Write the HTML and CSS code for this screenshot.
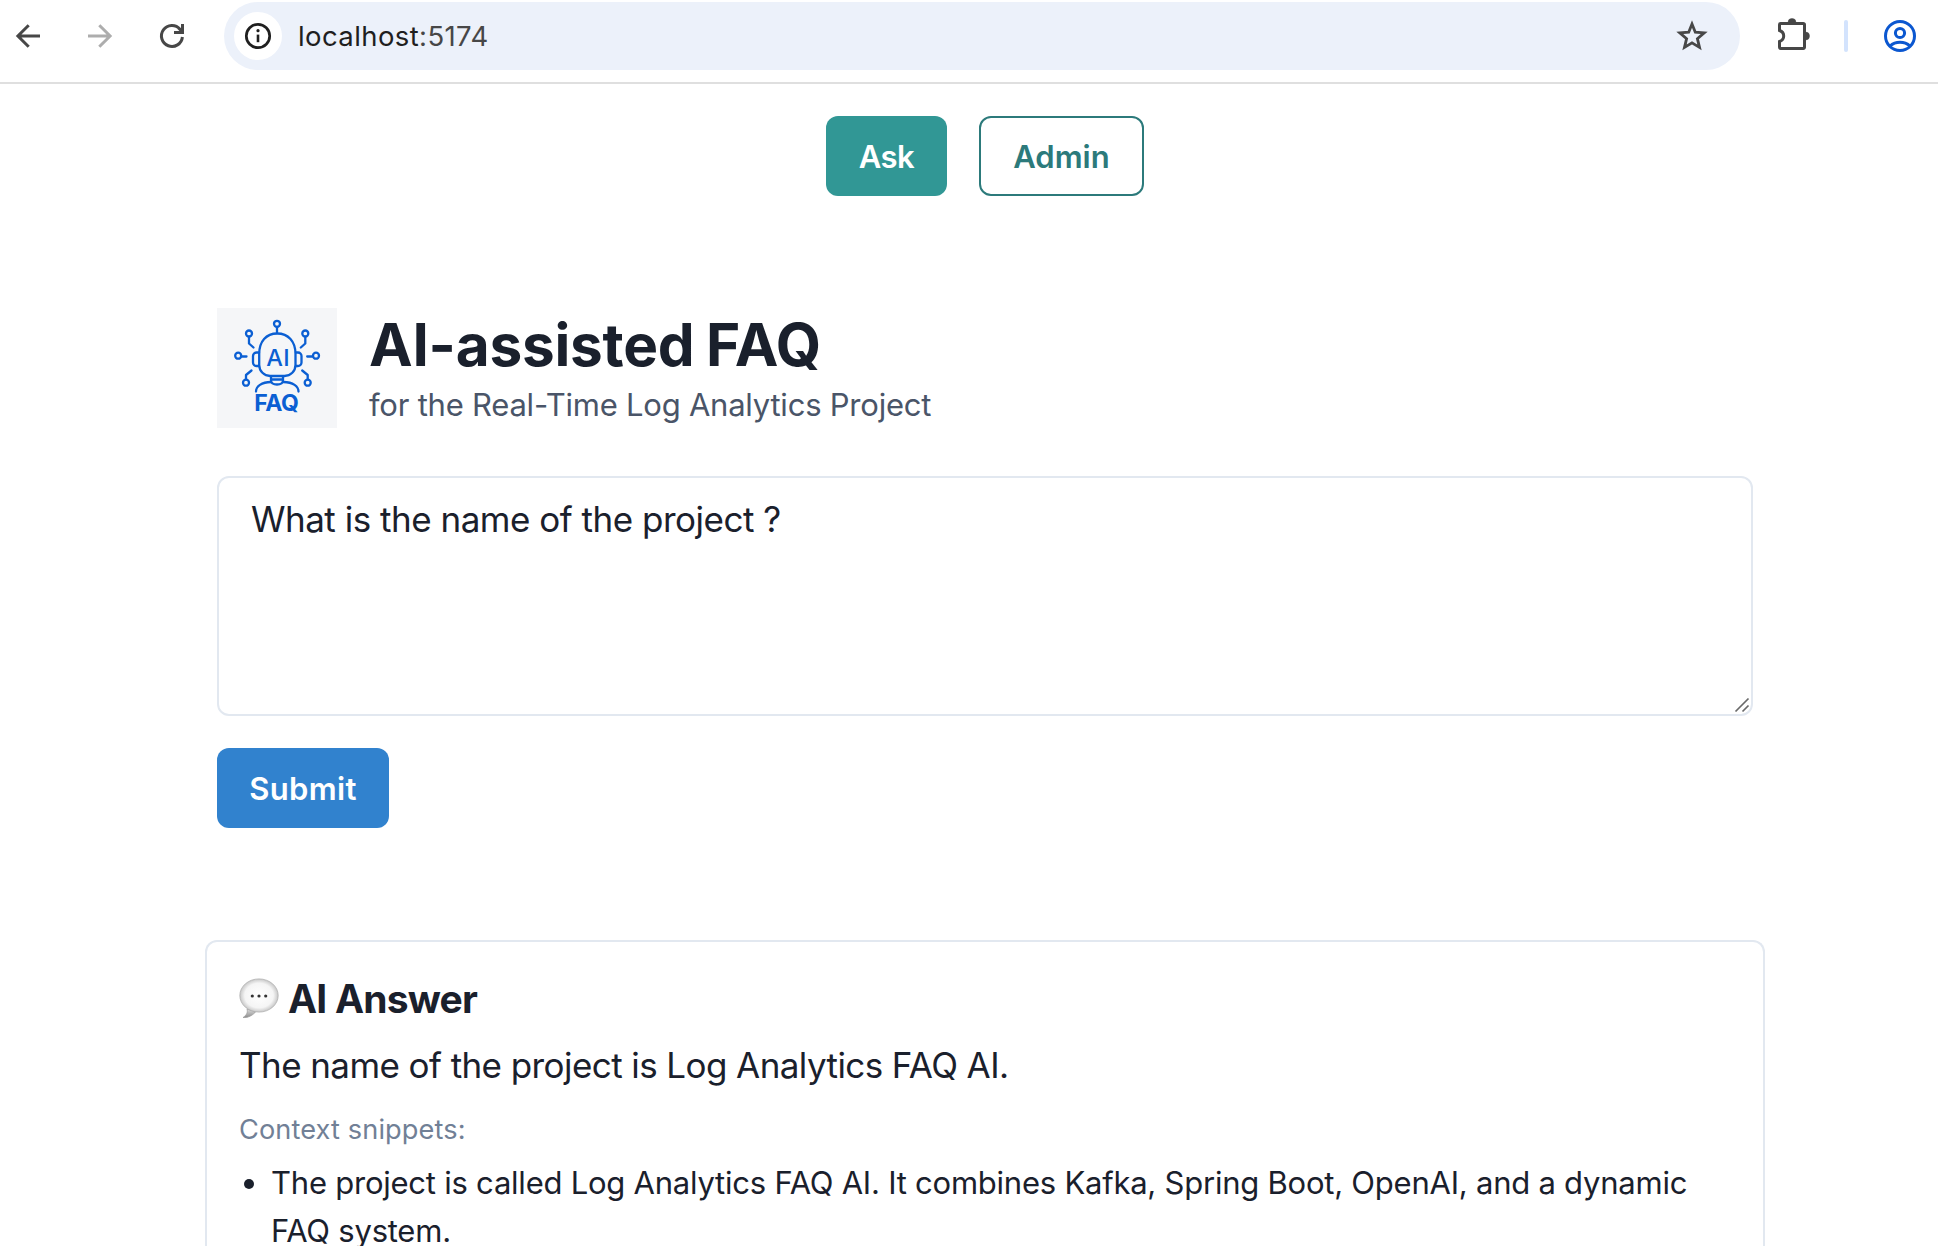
FILE: index.html
```html
<!DOCTYPE html>
<html lang="en">
<head>
<meta charset="utf-8">
<title>AI-assisted FAQ</title>
<link rel="stylesheet" href="styles.css">
</head>
<body>
<header class="toolbar">
  <nav class="nav">
    <svg class="nav-icon" viewBox="0 0 36 36"><path d="M30 18H8.500M18.700 7.200L7.900 18l10.800 10.800"/></svg>
    <svg class="nav-icon nav-icon-off" viewBox="0 0 36 36"><path d="M6 18h21.500M17.300 7.200L28.100 18 17.300 28.800"/></svg>
    <svg class="nav-icon" viewBox="0 0 36 36"><path d="M28.400 19A10.500 10.500 0 1 1 26 11.200M20 14.500h8.500V6M24.500 10l4 4"/></svg>
  </nav>
  <div class="omnibox">
    <span class="site-info">
      <svg width="30" height="30" viewBox="0 0 30 30"><circle cx="15" cy="15" r="11.700" fill="none" stroke="#1f1f1f" stroke-width="2.700"/><circle cx="15" cy="9.700" r="1.600" fill="#1f1f1f"/><path d="M15 13.600v7.600" stroke="#1f1f1f" stroke-width="2.600"/></svg>
    </span>
    <span class="url">localhost<span class="port">:5174</span></span>
    <svg class="star" width="36" height="36" viewBox="0 0 36 36"><path d="M18 6l3.300 8.200 8.900.7-6.800 5.800 2.100 8.700L18 24.800l-7.500 4.600 2.100-8.700-6.800-5.800 8.900-.7z" fill="none" stroke="#474747" stroke-width="2.800"/></svg>
  </div>
  <svg class="puzzle" width="36" height="36" viewBox="0 0 36 36"><path d="M3.500 8V6.700a1.200 1.200 0 0 1 1.200-1.200h22.600a1.200 1.200 0 0 1 1.200 1.200v22.600a1.200 1.200 0 0 1-1.200 1.200H4.700a1.200 1.200 0 0 1-1.200-1.200v-5.800c2.500-.8 4.200-2.900 4.200-5.500s-1.700-4.700-4.200-5.500z" fill="none" stroke="#474747" stroke-width="3"/><path d="M12 4.500a4 4 0 0 1 8 0zM29.500 14a4 4 0 0 1 0 8z" fill="#474747" stroke="#474747" stroke-width=".5"/></svg>
  <span class="divider"></span>
  <svg class="profile" width="32" height="32" viewBox="0 0 32 32" fill="none" stroke="#0b57d0" stroke-width="3"><circle cx="16" cy="16" r="14.500"/><circle cx="16" cy="13" r="4.600"/><path d="M6 26c5.500-5 14.500-5 20 0"/></svg>
</header>

<main class="page">
  <div class="tabs">
    <button class="btn btn-ask">Ask</button>
    <button class="btn btn-admin">Admin</button>
  </div>

  <section class="ask">
    <div class="brand">
      <svg class="logo" viewBox="0 0 120 120">
        <rect width="120" height="120" fill="#f5f6f8"/>
        <g fill="none" stroke="#0b5fd3" stroke-width="2.300" stroke-linecap="round" stroke-linejoin="round">
          <circle cx="60" cy="15.800" r="3"/><path d="M60 19v6"/>
          <path d="M42.200 46c0-12.500 7-20.500 18-20.500S78.500 33.500 78.500 46v11a11 11 0 0 1-11 11H53.200a11 11 0 0 1-11-11z"/>
          <path d="M42 44.500h-2.500a3.500 3.500 0 0 0-3.500 3.500v6.500a3.500 3.500 0 0 0 3.500 3.500H42M79 44.500h2a3.500 3.500 0 0 1 3.500 3.500v6.500a3.500 3.500 0 0 1-3.500 3.500h-2"/>
          <circle cx="32" cy="25.500" r="3"/><path d="M32 29v6.500l4.500 4"/>
          <circle cx="88.300" cy="25.500" r="3"/><path d="M88.300 29v6.500l-4.500 4"/>
          <circle cx="21.200" cy="47.700" r="3"/><path d="M24.500 48.500h5"/>
          <circle cx="99" cy="47.700" r="3"/><path d="M95.700 48.500h-5.500"/>
          <circle cx="29" cy="74.700" r="3"/><path d="M29 71.300V67l5.500-4.500"/>
          <circle cx="90.700" cy="74.700" r="3"/><path d="M90.700 71.300V67l-5.500-4.500"/>
          <path d="M54 68.500v4c0 2 2 4 6 4s6-2 6-4v-4M54.500 71.500h11"/>
          <path d="M39 83.500c0-5 5.500-9.500 15-9.500M81.500 83.500c0-5-5.500-9.500-15-9.500"/>
        </g>
        <text class="logo-ai" x="49.300" y="58.200">AI</text>
        <text class="logo-faq" x="37.300" y="103.300">FAQ</text>
      </svg>
      <div class="brand-text">
        <h1 class="title">AI-assisted FAQ</h1>
        <p class="subtitle">for the Real-Time Log Analytics Project</p>
      </div>
    </div>
    <div class="field">
      <textarea class="question" spellcheck="false">What is the name of the project ?</textarea>
      <svg class="grip" width="16" height="16" viewBox="0 0 16 16"><path d="M1.500 14.500l13-13M8.500 14.500l6-6" stroke="#6a6a6a" stroke-width="1.700"/></svg>
    </div>
    <button class="btn btn-submit">Submit</button>
  </section>

  <section class="card">
    <h2 class="answer-title">
      <svg class="bubble" width="40" height="42" viewBox="0 0 40 42">
        <defs>
          <radialGradient id="shine" cx=".5" cy=".5" r=".53"><stop offset="0" stop-color="#fff"/><stop offset=".7" stop-color="#f5f5f5"/><stop offset="1" stop-color="#bdbdbd"/></radialGradient>
          <linearGradient id="tail" x1="0" y1="0" x2="0" y2="1"><stop offset="0" stop-color="#ddd"/><stop offset="1" stop-color="#8e8e8e"/></linearGradient>
        </defs>
        <path d="M8 31c1 3-.5 6.500-4 8.500 5.500.5 10-2.500 13-6z" fill="url(#tail)" stroke="#999" stroke-width=".7"/>
        <ellipse cx="20" cy="17.500" rx="19.200" ry="16.600" fill="url(#shine)" stroke="#aaa" stroke-width=".7"/>
        <g fill="#333"><circle cx="13.300" cy="18" r="1.600"/><circle cx="20" cy="18" r="1.600"/><circle cx="26.700" cy="18" r="1.600"/></g>
      </svg>
      <span>AI Answer</span>
    </h2>
    <p class="answer">The name of the project is Log Analytics FAQ AI.</p>
    <p class="context">Context snippets:</p>
    <ul class="snippets">
      <li class="snippet"><span class="dot"></span><span>The project is called Log Analytics FAQ AI. It combines Kafka, Spring Boot, OpenAI, and a dynamic FAQ system.</span></li>
    </ul>
  </section>
</main>
</body>
</html>
```
FILE: styles.css
```css
* { box-sizing: border-box; }

html, body { height: 100%; }

body {
  display: flex;
  flex-direction: column;
  margin: 0;
  overflow: hidden;
  background: #fff;
  color: #1a202c;
  font-family: Inter, "Liberation Sans", sans-serif;
}

h1, h2, p, ul { margin: 0; padding: 0; }
svg { display: block; flex: none; }

/* Browser toolbar */
.toolbar {
  display: flex;
  flex: none;
  align-items: center;
  height: 84px;
  padding: 0 0 10px 10px;
  border-bottom: 2px solid #dfdfdf;
}
.nav { display: flex; gap: 36px; margin-right: 34px; }
.nav-icon { width: 36px; height: 36px; fill: none; stroke: #474747; stroke-width: 3; }
.nav-icon-off { stroke: #adadad; }
.omnibox {
  display: flex;
  align-items: center;
  width: 1516px;
  height: 68px;
  padding: 0 30px 0 10px;
  border-radius: 34px;
  background: #ecf1fa;
}
.site-info {
  display: flex;
  align-items: center;
  justify-content: center;
  width: 48px;
  height: 48px;
  border-radius: 50%;
  background: #fff;
}
.url {
  margin-left: 16px;
  color: #1f1f1f;
  font-size: 27.5px;
  letter-spacing: 0.4px;
}
.port { color: #474747; }
.star { margin-left: auto; }
.puzzle { margin-left: 36px; }
.divider {
  width: 4px;
  height: 32px;
  margin: 0 36px 0 32px;
  border-radius: 2px;
  background: #d3e3fd;
}

/* The app is laid out a little wider than the visible window */
.page {
  display: flex;
  flex: 1;
  flex-direction: column;
  width: 1970px;
  min-height: 0;
  padding-top: 32px;
}

.btn {
  display: flex;
  align-items: center;
  justify-content: center;
  height: 80px;
  padding: 2px 0 0;
  border: 0;
  border-radius: 12px;
  font: 600 31px/48px Inter, "Liberation Sans", sans-serif;
}
.tabs { display: flex; flex: none; justify-content: center; gap: 32px; }
.btn-ask { width: 121px; background: #319795; color: #fff; letter-spacing: -0.5px; }
.btn-admin { width: 165px; border: 2px solid #2c7a7b; background: #fff; color: #2c7a7b; letter-spacing: 0; }
.btn-submit { width: 172px; background: #3182ce; color: #fff; letter-spacing: 0.35px; }

.ask {
  display: flex;
  flex: none;
  flex-direction: column;
  width: 1536px;
  margin: 112px auto 0;
}
.brand { display: flex; gap: 32px; height: 120px; }
.logo { width: 120px; height: 120px; }
.logo text { fill: #0b5fd3; font-family: Inter, sans-serif; }
.logo-ai { font-size: 23.5px; font-weight: 500; letter-spacing: 0.3px; }
.logo-faq { font-size: 23px; font-weight: 650; letter-spacing: -0.5px; }
.brand-text { padding-top: 1px; }
.title { font-size: 58.5px; line-height: 72px; font-weight: 700; letter-spacing: -0.25px; word-spacing: -2px; }
.subtitle { color: #4a5568; font-size: 31px; line-height: 48px; letter-spacing: -0.225px; }

.field { position: relative; height: 240px; margin: 48px 0 32px; }
.question {
  display: block;
  width: 100%;
  height: 100%;
  padding: 17px 32px;
  border: 2px solid #e2e8f0;
  border-radius: 12px;
  outline: 0;
  resize: none;
  background: #fff;
  color: #1a202c;
  font: 400 35px/49.5px Inter, "Liberation Sans", sans-serif;
  letter-spacing: -0.49px;
}
.grip { position: absolute; right: 3px; bottom: 3px; }

.card {
  flex: 1;
  width: 1560px;
  min-height: 0;
  margin: 112px auto 0;
  padding: 33px 32px 0;
  border: 2px solid #e2e8f0;
  border-bottom: 0;
  border-radius: 12px 12px 0 0;
}
.answer-title {
  display: flex;
  align-items: center;
  gap: 9px;
  font-size: 39px;
  line-height: 48px;
  font-weight: 700;
  letter-spacing: -0.8px;
}
.answer { margin-top: 15px; font-size: 35px; line-height: 54px; letter-spacing: -0.578px; }
.context { margin-top: 17px; color: #718096; font-size: 27.2px; line-height: 42px; letter-spacing: 0.1px; }
.snippets { margin-top: 8px; list-style: none; }
.snippet { display: flex; gap: 17px; padding-left: 5px; font-size: 31px; line-height: 48px; letter-spacing: -0.232px; }
.dot { flex: none; width: 10px; height: 10px; margin-top: 20px; border-radius: 50%; background: #1a202c; }
```
